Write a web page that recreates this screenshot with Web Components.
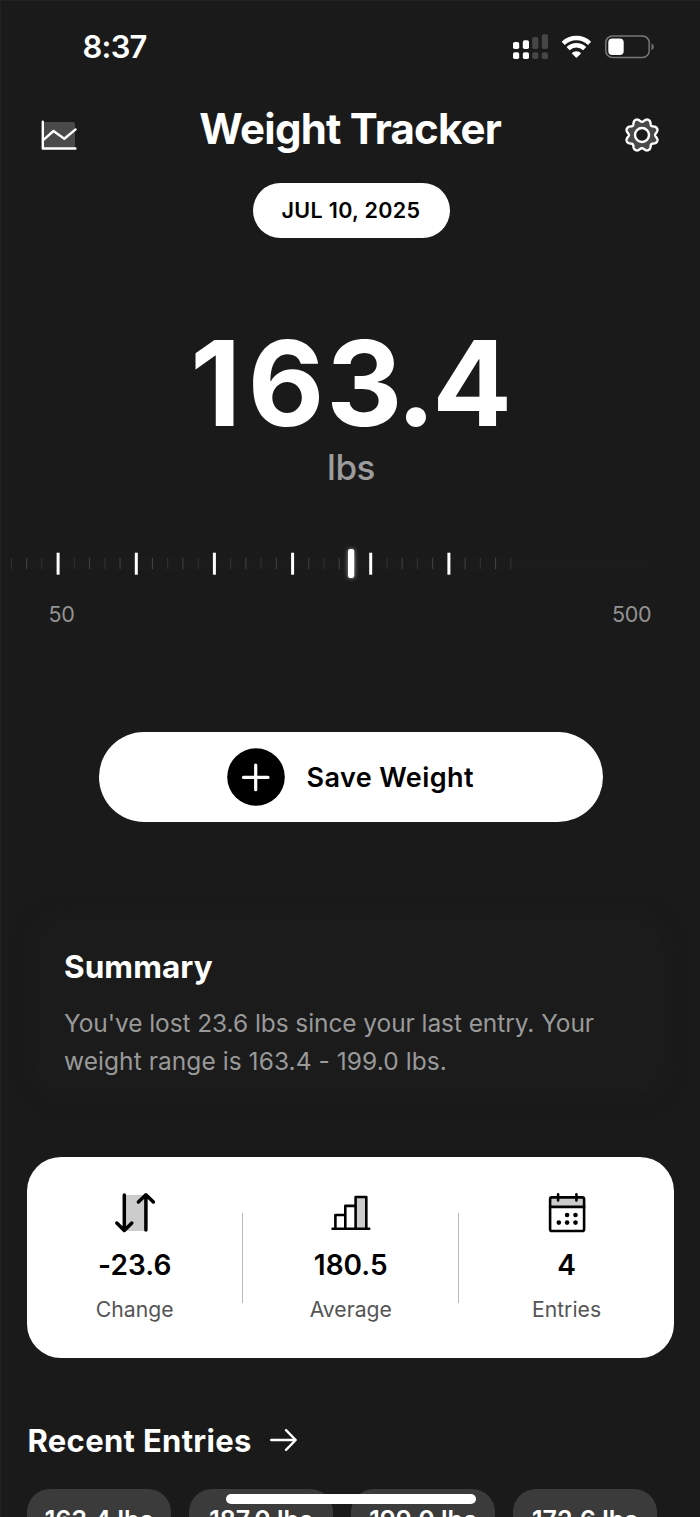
<!DOCTYPE html>
<html lang="en">
<head>
<meta charset="utf-8">
<title>Weight Tracker</title>
<style>
html, body { margin: 0; height: 100%; background: #1a1a1a; overflow: hidden; }
</style>
</head>
<body>
<weight-app></weight-app>
<script>
const define = (name, html, init) => {
  const template = document.createElement('template');
  template.innerHTML = html;
  customElements.define(name, class extends HTMLElement {
    constructor() {
      super();
      this.attachShadow({ mode: 'open' }).append(template.content.cloneNode(true));
    }
    connectedCallback() { if (init) init(this.shadowRoot, this); }
  });
};

define('status-bar', `
<style>
:host { display: flex; height: 94px; align-items: center; justify-content: space-between; padding: 0 45px 0 82.500px; box-sizing: border-box; }
time { font-size: 31px; font-weight: 600; letter-spacing: -.8px; margin-bottom: 1px; }
svg { display: block; }
</style>
<time>8:37</time>
<svg width="143" height="30" viewBox="512 32 143 30">
  <g fill="#fff"><rect x="513" y="42" width="6.2" height="7" rx="1.8"/><rect x="522.8" y="40.3" width="6.2" height="8.7" rx="1.8"/><rect x="513" y="52.2" width="6.2" height="6.8" rx="1.8"/><rect x="522.8" y="52.2" width="6.2" height="6.8" rx="1.8"/></g>
  <g fill="#464646"><rect x="532.2" y="37" width="6.2" height="12" rx="1.8"/><rect x="541.8" y="34.2" width="6.2" height="14.8" rx="1.8"/><rect x="532.2" y="52.2" width="6.2" height="6.8" rx="1.8"/><rect x="541.8" y="52.2" width="6.2" height="6.8" rx="1.8"/></g>
  <g fill="none" stroke="#fff" stroke-width="4.500">
    <path d="M563.2 43.400a19 19 0 0 1 26.400 0"/><path d="M568.1 48.600a12 12 0 0 1 16.600 0"/>
  </g>
  <path d="M571.600 53.200a7 7 0 0 1 9.600 0L576.900 57.600q-.5.4-1 0z" fill="#fff"/>
  <rect x="605.8" y="35.900" width="43.400" height="21.600" rx="6.800" fill="none" stroke="#777" stroke-width="1.500"/>
  <rect x="608.300" y="38.500" width="15.400" height="16.400" rx="4" fill="#fff"/>
  <path d="M651.500 43.400q2.300.8 2.300 3.400t-2.300 3.400z" fill="#777"/>
</svg>`);

define('app-header', `
<style>
:host { display: flex; height: 70px; align-items: center; justify-content: space-between; padding: 0 39px 0 38.500px; }
h1 { margin: 0; font-size: 42px; font-weight: 700; letter-spacing: -.78px; line-height: 50px; }
svg { display: block; margin-top: 12px; }
</style>
<svg width="39" height="40" viewBox="39 115 39 40">
  <path d="M43 122h29.500q2.500 0 2.500 2.500V148H43z" fill="#4a4a4a"/>
  <path d="M42.800 121.700V148.500H75.400" fill="none" stroke="#fff" stroke-width="2.400" stroke-linecap="round" stroke-linejoin="round"/>
  <path d="M43.500 139.800L53.500 131L64.300 138.700L75.600 129.400" fill="none" stroke="#fff" stroke-width="2.400" stroke-linecap="round" stroke-linejoin="round"/>
</svg>
<h1>Weight Tracker</h1>
<svg width="38" height="40" viewBox="-19 -20 38 40">
  <path id="cog" fill="#4a4a4a" stroke="#fff" stroke-width="2.400" stroke-linejoin="round"/>
  <circle r="7" fill="#1a1a1a" stroke="#fff" stroke-width="2.400"/>
</svg>`, root => {
  // Eight rounded teeth with a notch on every 45 degree axis.
  let d = '';
  for (let i = 0; i < 240; i++) {
    const a = i / 240 * Math.PI * 2;
    const r = 16.4 - 3.300 * Math.pow(Math.abs(Math.cos(4 * a)), 2.600);
    d += (i ? 'L' : 'M') + (r * Math.cos(a)).toFixed(2) + ' ' + (r * Math.sin(a)).toFixed(2);
  }
  root.getElementById('cog').setAttribute('d', d + 'Z');
});

define('date-pill', `
<style>
:host { display: block; width: 197px; height: 54.500px; margin: 19px 0 0 252.500px; border-radius: 28px; background: #fff; color: #000; font-size: 21.500px; font-weight: 600; letter-spacing: .34px; line-height: 54.500px; text-align: center; }
</style><slot></slot>`);

define('weight-value', `
<style>
:host { display: flex; flex-direction: column; align-items: center; margin-top: 75px; padding-left: 2px; }
strong { font-size: 118px; line-height: 140px; font-weight: 700; letter-spacing: .85px; padding-left: 1px; }
span { font-size: 35px; line-height: 30px; font-weight: 500; letter-spacing: -.48px; color: #9c9c9c; margin-top: -1px; }
</style>
<strong><slot></slot></strong><span><slot name="unit"></slot></span>`);

define('weight-ruler', `
<style>
:host { display: block; margin-top: 59px; }
svg { display: block; }
div { display: flex; justify-content: space-between; padding: 0 48.500px; height: 30px; line-height: 30px; margin-top: 17.200px; font-size: 21.500px; color: #939393; letter-spacing: -.2px; }
</style>
<svg width="700" height="41" viewBox="0 541 700 41">
  <defs><filter id="glow" x="-300%" y="-50%" width="700%" height="200%"><feGaussianBlur stdDeviation="2.200"/></filter></defs>
  <rect x="28" y="556.500" width="628" height="15" rx="7.500" fill="#1b1b1b"/>
  <g id="ticks"></g>
  <rect x="348" y="549" width="6.300" height="29" rx="2.500" fill="#fff" opacity=".6" filter="url(#glow)"/>
  <rect x="348" y="549" width="6.200" height="29" rx="2.200" fill="#fff"/>
</svg>
<div><span><slot name="min"></slot></span><span><slot name="max"></slot></span></div>`, root => {
  let s = '';
  for (let n = -3; n <= 29; n++) {
    const step = ((n % 5) + 5) % 5;
    const start = 58.1 + Math.floor(n / 5) * 78.15;
    const x = step ? start + 16.2 + 15.25 * (step - 1) : start;
    s += step
      ? `<rect x="${(x - .55).toFixed(1)}" y="558" width="1.1" height="11" fill="${n % 2 ? '#313131' : '#414141'}"/>`
      : `<rect x="${(x - 1.5).toFixed(1)}" y="552.7" width="3" height="22" fill="#fff"/>`;
  }
  root.getElementById('ticks').innerHTML = s;
});

define('save-button', `
<style>
:host { display: flex; box-sizing: border-box; width: 503.500px; height: 90px; margin: 103.500px 0 0 99px; padding-left: 128px; align-items: center; gap: 21.500px; border-radius: 45px; background: #fff; color: #000; font-size: 27px; font-weight: 600; letter-spacing: .41px; }
svg { display: block; }
span { margin-top: 1px; }
</style>
<svg width="58" height="58" viewBox="-29 -29 58 58"><circle r="28.800"/><path d="M-12.500 .4H12M-.300-12V12.700" stroke="#fff" stroke-width="3.200" stroke-linecap="round"/></svg>
<span><slot></slot></span>`);

define('summary-card', `
<style>
:host { display: block; box-sizing: border-box; width: 627px; height: 175px; margin: 97px 0 0 36px; padding: 30px 28px; border-radius: 30px; background: #1b1b1b; box-shadow: 0 0 14px 10px #1b1b1b; }
h2 { margin: 0; font-size: 31.500px; line-height: 36px; font-weight: 700; letter-spacing: .05px; }
p { margin: 20px 0 0; font-size: 24.500px; line-height: 37.600px; letter-spacing: -.08px; color: #999; white-space: nowrap; }
</style>
<h2><slot name="title"></slot></h2><p><slot></slot></p>`);

define('stat-card', `
<style>
:host { display: grid; box-sizing: border-box; grid-template-columns: 215.500px 216.500px 215px; width: 647px; height: 200.500px; margin: 63.100px 0 0 27.300px; border-radius: 34px; background: #fff; }
</style><slot></slot>`);

define('stat-item', `
<style>
:host { display: flex; flex-direction: column; align-items: center; color: #000; padding-top: 31px; padding-right: .6px;
  background: linear-gradient(#bbb, #bbb) no-repeat 100% 55.500px / var(--rule, 1.300px) 90px; }
b { font-size: 28px; line-height: 36px; font-weight: 600; margin-top: 9px; letter-spacing: .05px; }
span { font-size: 21.200px; line-height: 30px; color: #555; margin-top: 10.700px; }
::slotted(svg) { display: block; }
</style>
<slot name="icon"></slot><b><slot></slot></b><span><slot name="label"></slot></span>`);

define('section-title', `
<style>
:host { display: flex; align-items: center; height: 40px; margin: 62.300px 0 0 27.500px; gap: 17.500px; font-size: 31px; font-weight: 700; letter-spacing: .32px; }
svg { display: block; }
</style>
<span><slot></slot></span>
<svg width="30" height="26" viewBox="269 1427.500 30 26"><path d="M271.200 1440.500H295.500M286 1430.700L295.700 1440.500L286 1450.300" fill="none" stroke="#fff" stroke-width="2.400" stroke-linecap="round" stroke-linejoin="round"/></svg>`);

define('entry-row', `
<style>
:host { display: grid; grid-template-columns: repeat(4, 143.500px); gap: 18.500px; margin: 28.500px 0 0 27.300px; }
</style><slot></slot>`);

define('entry-card', `
<style>
:host { display: block; box-sizing: border-box; height: 100px; padding-top: 16px; border-radius: 23px; background: #3b3b3b; font-size: 25px; line-height: 30px; font-weight: 600; text-align: center; white-space: nowrap; }
</style><slot></slot>`);

define('home-indicator', `
<style>
:host { position: absolute; left: 226px; bottom: 13.300px; width: 250px; height: 9.700px; border-radius: 5px; background: #fff; }
</style>`);

define('weight-app', `
<style>
:host { display: block; position: relative; box-sizing: border-box; width: 700px; height: 1517px; overflow: hidden; background: #1a1a1a; box-shadow: inset 1px 1px #222; color: #fff; font-family: Inter, "Liberation Sans", sans-serif; }
.one { letter-spacing: 6.800px; }
.six { letter-spacing: 1.800px; }
.point { letter-spacing: -3.600px; }
.range { letter-spacing: .06px; }
</style>
<status-bar></status-bar>
<app-header></app-header>
<date-pill>JUL 10, 2025</date-pill>
<weight-value><span class="one">1</span><span class="six">6</span><span class="point">3.</span>4<span slot="unit">lbs</span></weight-value>
<weight-ruler><span slot="min">50</span><span slot="max">500</span></weight-ruler>
<save-button>Save Weight</save-button>
<summary-card><span slot="title">Summary</span>You've lost 23.6 lbs since your last entry. Your<br><span class="range">weight range is 163.4 - 199.0 lbs.</span></summary-card>
<stat-card>
  <stat-item>
    <svg slot="icon" width="50" height="50" viewBox="110 1188 50 50"><path d="M124.500 1195H146V1231H124.500z" fill="#ccc"/><path d="M124.300 1195V1230M116.800 1223L124.300 1230.500L131.800 1223M145.900 1230V1195M138.400 1202L145.900 1194.800L153.400 1202" fill="none" stroke="#000" stroke-width="3.500" stroke-linecap="round" stroke-linejoin="round"/></svg>
    -23.6<span slot="label">Change</span>
  </stat-item>
  <stat-item>
    <svg slot="icon" width="50" height="50" viewBox="326 1188 50 50"><path d="M355.500 1197H366V1228H355.500z" fill="#ccc"/><path d="M332.500 1228.700H369.200M335.400 1228V1215H345M345.300 1228V1205.900H355.500M355.600 1228V1197H366.300V1228" fill="none" stroke="#000" stroke-width="2.600" stroke-linecap="round" stroke-linejoin="round"/></svg>
    180.5<span slot="label">Average</span>
  </stat-item>
  <stat-item style="--rule:0px">
    <svg slot="icon" width="50" height="50" viewBox="541.700 1188 50 50"><path d="M550 1197.500H584V1207H550z" fill="#ccc"/><rect x="549.800" y="1197.400" width="34" height="33.600" rx="1.800" fill="none" stroke="#000" stroke-width="2.600"/><path d="M549.800 1206.900H583.800M557.800 1194.400V1200.400M576.100 1194.400V1200.400" stroke="#000" stroke-width="2.600" stroke-linecap="round"/><g><circle cx="566.800" cy="1215" r="2.300"/><circle cx="575.200" cy="1215" r="2.300"/><circle cx="558.500" cy="1222.600" r="2.300"/><circle cx="566.800" cy="1222.600" r="2.300"/><circle cx="575.200" cy="1222.600" r="2.300"/></g></svg>
    4<span slot="label">Entries</span>
  </stat-item>
</stat-card>
<section-title>Recent Entries</section-title>
<entry-row>
  <entry-card>163.4 lbs</entry-card><entry-card>187.0 lbs</entry-card><entry-card>199.0 lbs</entry-card><entry-card>172.6 lbs</entry-card>
</entry-row>
<home-indicator></home-indicator>`);
</script>
</body>
</html>
